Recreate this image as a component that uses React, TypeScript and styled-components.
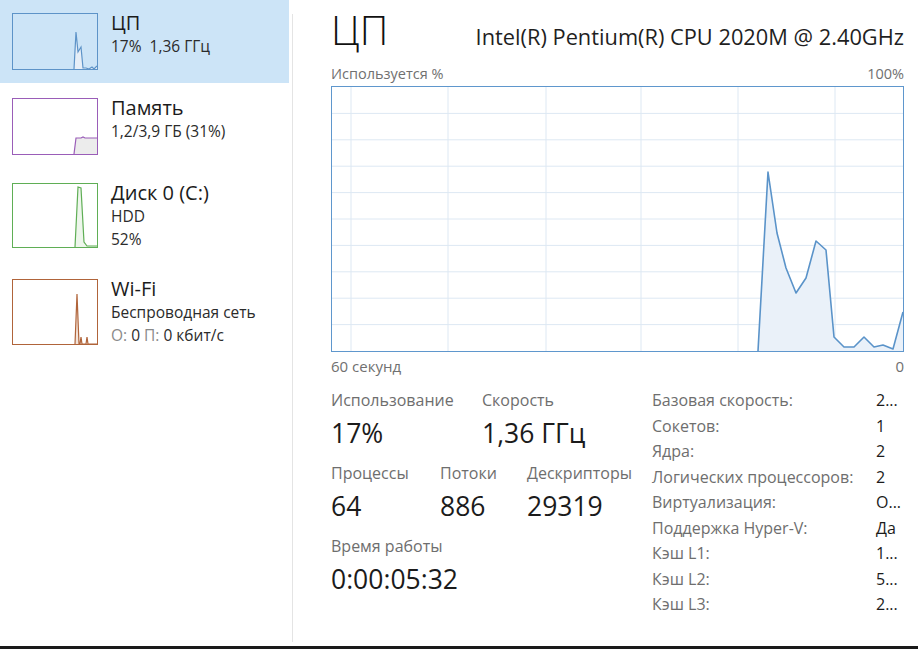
import React, { ReactElement } from 'react';
import styled, { createGlobalStyle } from 'styled-components';

const GlobalStyle = createGlobalStyle`
  html, body {
    margin: 0;
    padding: 0;
    background: #ffffff;
  }
  body {
    font-family: 'Open Sans', 'Noto Sans', sans-serif;
    color: #1b1b1b;
  }
`;

const Window = styled.div`
  width: 918px;
  height: 649px;
  box-sizing: border-box;
  display: flex;
  background: #ffffff;
  border-bottom: 3px solid #1a1a1a;
  overflow: hidden;
`;

const Sidebar = styled.div`
  width: 292px;
  flex: none;
  display: flex;
  flex-direction: column;
  gap: 2px;
`;

const SideItem = styled.div<{ active?: boolean }>`
  width: 289px;
  box-sizing: border-box;
  display: flex;
  align-items: flex-start;
  gap: 13px;
  padding: 11px 0 13px 12px;
  background: ${({ active }) => (active ? '#cce4f7' : 'transparent')};
`;

const Thumb = styled.div<{ color: string; h: number }>`
  width: 86px;
  height: ${({ h }) => h}px;
  margin-top: 2px;
  box-sizing: border-box;
  border: 1px solid ${({ color }) => color};
  flex: none;
  svg {
    display: block;
    width: 100%;
    height: 100%;
  }
`;

const SideText = styled.div`
  display: flex;
  flex-direction: column;
`;

const SideTitle = styled.div`
  font-size: 20px;
  line-height: 24px;
  color: #1b1b1b;
  white-space: nowrap;
`;

const SideSub = styled.div`
  font-size: 15.5px;
  line-height: 23px;
  color: #2b2b2b;
  white-space: nowrap;
`;

const Dim = styled.span`
  color: #8a8a8a;
`;

const Main = styled.div`
  flex: 1;
  margin: 14px 0 4px;
  border-left: 1px solid #e4e4e4;
  padding: 0 14px 0 38px;
  display: flex;
  flex-direction: column;
`;

const Header = styled.div`
  display: flex;
  justify-content: space-between;
  align-items: baseline;
  height: 60px;
  margin-top: -14px;
`;

const BigTitle = styled.div`
  font-size: 40px;
  font-weight: 300;
  line-height: 60px;
  color: #111111;
`;

const CpuName = styled.div`
  font-size: 21.8px;
  color: #1f1f1f;
  white-space: nowrap;
`;

const AxisRow = styled.div`
  display: flex;
  justify-content: space-between;
  font-size: 14.5px;
  line-height: 20px;
  color: #707070;
  margin-top: 4px;
`;

const ChartBox = styled.div`
  width: 573px;
  height: 266px;
  margin-top: 2px;
  box-sizing: border-box;
  border: 1px solid #5f97cd;
  svg {
    display: block;
  }
`;

const BottomAxis = styled(AxisRow)`
  font-size: 15px;
  margin-top: 4px;
`;

const StatsArea = styled.div`
  display: flex;
  margin-top: 13px;
`;

const StatsLeft = styled.div`
  width: 321px;
  display: flex;
  flex-direction: column;
  gap: 7px;
`;

const StatRow = styled.div`
  display: flex;
`;

const Stat = styled.div<{ w?: number }>`
  width: ${({ w }) => (w ? `${w}px` : 'auto')};
  flex: none;
`;

const StatLabel = styled.div`
  font-size: 16px;
  line-height: 22px;
  color: #6e6e6e;
  white-space: nowrap;
`;

const StatValue = styled.div`
  font-size: 26.5px;
  line-height: 44px;
  color: #1b1b1b;
  white-space: nowrap;
`;

const InfoTable = styled.div`
  display: grid;
  grid-template-columns: 224px auto;
  margin-top: -1px;
`;

const InfoLabel = styled.div`
  font-size: 16px;
  line-height: 25.5px;
  color: #6e6e6e;
  white-space: nowrap;
`;

const InfoValue = styled.div`
  font-size: 16px;
  line-height: 25.5px;
  color: #1b1b1b;
`;

const CHART_W = 571;
const CHART_H = 264;

const cpuPoints: [number, number][] = [
  [426, 264],
  [436, 85],
  [445, 146],
  [454, 181],
  [464, 206],
  [474, 191],
  [484, 154],
  [494, 163],
  [502, 250],
  [512, 260],
  [522, 260],
  [532, 250],
  [542, 260],
  [551, 258],
  [561, 262],
  [571, 225],
];

const CpuChart = (): ReactElement => {
  const rows = Array.from({ length: 9 }, (_, i) => (CHART_H / 10) * (i + 1));
  const cols = [19, 116, 214, 309, 406, 503];
  const line = cpuPoints.map(([x, y]) => `${x},${y}`).join(' ');
  const area = `${cpuPoints[0][0]},${CHART_H} ${line} ${CHART_W},${CHART_H}`;
  return (
    <svg width={CHART_W} height={CHART_H} viewBox={`0 0 ${CHART_W} ${CHART_H}`}>
      {rows.map((y) => (
        <line key={`r${y}`} x1={0} x2={CHART_W} y1={y} y2={y} stroke="#dde8f3" strokeWidth={1} />
      ))}
      {cols.map((x) => (
        <line key={`c${x}`} x1={x} x2={x} y1={0} y2={CHART_H} stroke="#dde8f3" strokeWidth={1} />
      ))}
      <polygon points={area} fill="#eaf1f9" />
      <polyline points={line} fill="none" stroke="#5a93c9" strokeWidth={1.6} strokeLinejoin="round" />
    </svg>
  );
};

interface MiniProps {
  points: string;
  color: string;
  fill: string;
  h: number;
}

const MiniChart = ({ points, color, fill, h }: MiniProps): ReactElement => {
  const first = points.split(' ')[0].split(',')[0];
  return (
    <svg viewBox={`0 0 84 ${h - 2}`} preserveAspectRatio="none">
      <polygon points={`${first},${h - 2} ${points} 84,${h - 2}`} fill={fill} />
      <polyline points={points} fill="none" stroke={color} strokeWidth={1.2} />
    </svg>
  );
};

const sideItems = [
  {
    key: 'cpu',
    title: 'ЦП',
    lines: [<>17%&nbsp; 1,36 ГГц</>],
    color: '#5d93c8',
    fill: '#e6eef7',
    h: 57,
    points: '61,55 63,18 65,38 68,33 70,54 73,54 76,55 79,53 81,55 84,52',
    active: true,
  },
  {
    key: 'mem',
    title: 'Память',
    lines: [<>1,2/3,9 ГБ (31%)</>],
    color: '#9a5db8',
    fill: '#ececec',
    h: 57,
    points: '61,55 63,39 68,39 70,38 72,39 84,39',
  },
  {
    key: 'disk',
    title: 'Диск 0 (C:)',
    lines: [<>HDD</>, <>52%</>],
    color: '#5fae55',
    fill: '#eef6ec',
    h: 65,
    points: '62,63 65,3 68,4 71,58 74,62 84,62',
  },
  {
    key: 'wifi',
    title: 'Wi-Fi',
    lines: [
      <>Беспроводная сеть</>,
      <>
        <Dim>О:</Dim> 0 <Dim>П:</Dim> 0 кбит/с
      </>,
    ],
    color: '#b0643a',
    fill: '#f3e4da',
    h: 66,
    points: '62,64 64,14 66,64 67,64 68,57 69,64 73,64 74,57 75,64 84,64',
  },
];

const infoRows: [string, string][] = [
  ['Базовая скорость:', '2...'],
  ['Сокетов:', '1'],
  ['Ядра:', '2'],
  ['Логических процессоров:', '2'],
  ['Виртуализация:', 'О...'],
  ['Поддержка Hyper-V:', 'Да'],
  ['Кэш L1:', '1...'],
  ['Кэш L2:', '5...'],
  ['Кэш L3:', '2...'],
];

function App(): ReactElement {
  return (
    <Window>
      <GlobalStyle />
      <Sidebar>
        {sideItems.map((item) => (
          <SideItem key={item.key} active={item.active}>
            <Thumb color={item.color} h={item.h}>
              <MiniChart points={item.points} color={item.color} fill={item.fill} h={item.h} />
            </Thumb>
            <SideText>
              <SideTitle>{item.title}</SideTitle>
              {item.lines.map((line, i) => (
                <SideSub key={i}>{line}</SideSub>
              ))}
            </SideText>
          </SideItem>
        ))}
      </Sidebar>

      <Main>
        <Header>
          <BigTitle>ЦП</BigTitle>
          <CpuName>Intel(R) Pentium(R) CPU 2020M @ 2.40GHz</CpuName>
        </Header>

        <AxisRow>
          <span>Используется %</span>
          <span>100%</span>
        </AxisRow>
        <ChartBox>
          <CpuChart />
        </ChartBox>
        <BottomAxis>
          <span>60 секунд</span>
          <span>0</span>
        </BottomAxis>

        <StatsArea>
          <StatsLeft>
            <StatRow>
              <Stat w={151}>
                <StatLabel>Использование</StatLabel>
                <StatValue>17%</StatValue>
              </Stat>
              <Stat>
                <StatLabel>Скорость</StatLabel>
                <StatValue>1,36 ГГц</StatValue>
              </Stat>
            </StatRow>
            <StatRow>
              <Stat w={109}>
                <StatLabel>Процессы</StatLabel>
                <StatValue>64</StatValue>
              </Stat>
              <Stat w={87}>
                <StatLabel>Потоки</StatLabel>
                <StatValue>886</StatValue>
              </Stat>
              <Stat>
                <StatLabel>Дескрипторы</StatLabel>
                <StatValue>29319</StatValue>
              </Stat>
            </StatRow>
            <StatRow>
              <Stat>
                <StatLabel>Время работы</StatLabel>
                <StatValue>0:00:05:32</StatValue>
              </Stat>
            </StatRow>
          </StatsLeft>

          <InfoTable>
            {infoRows.map(([label, value]) => (
              <React.Fragment key={label}>
                <InfoLabel>{label}</InfoLabel>
                <InfoValue>{value}</InfoValue>
              </React.Fragment>
            ))}
          </InfoTable>
        </StatsArea>
      </Main>
    </Window>
  );
}

export default App;
